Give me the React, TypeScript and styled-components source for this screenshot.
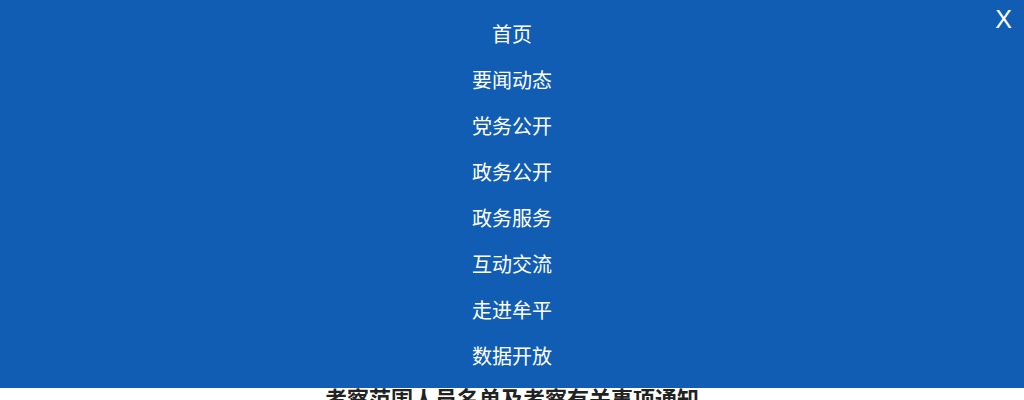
import * as React from 'react'
import styled, { createGlobalStyle } from 'styled-components'

const menu = ['首页', '要闻动态', '党务公开', '政务公开', '政务服务', '互动交流', '走进牟平', '数据开放']

const GlobalStyle = createGlobalStyle`
  html, body {
    margin: 0;
    padding: 0;
    background: #ffffff;
    font-family: "Liberation Sans", "Noto Sans CJK SC", sans-serif;
  }
`

const Page = styled.div`
  position: relative;
  width: 100%;
  height: 400px;
  overflow: hidden;
`

const MenuPanel = styled.nav`
  display: flex;
  flex-direction: column;
  align-items: center;
  background: #115db3;
  padding: 12px 0 8px;
  height: 388px;
  box-sizing: border-box;
`

const MenuItem = styled.a`
  display: block;
  height: 46px;
  line-height: 46px;
  font-size: 20px;
  color: #ffffff;
  text-decoration: none;
  font-family: "Liberation Sans", "Noto Sans CJK SC", sans-serif;
`

const Close = styled.button`
  position: absolute;
  top: 2px;
  right: 10px;
  background: none;
  border: none;
  padding: 2px;
  color: #ffffff;
  font-size: 25px;
  line-height: 30px;
  font-family: "Liberation Sans", Arial, sans-serif;
  cursor: pointer;
`

const Title = styled.h2`
  margin: 0;
  text-align: center;
  font-size: 22px;
  line-height: 24px;
  font-weight: bold;
  color: #222222;
  font-family: "Liberation Sans", "Noto Sans CJK SC", sans-serif;
`

const App = () => {
  return (
    <>
      <GlobalStyle />
      <Page>
        <MenuPanel>
          {menu.map((m) => (
            <MenuItem key={m} href="#">{m}</MenuItem>
          ))}
        </MenuPanel>
        <Close>X</Close>
        <Title>考察范围人员名单及考察有关事项通知</Title>
      </Page>
    </>
  )
}

export default App
